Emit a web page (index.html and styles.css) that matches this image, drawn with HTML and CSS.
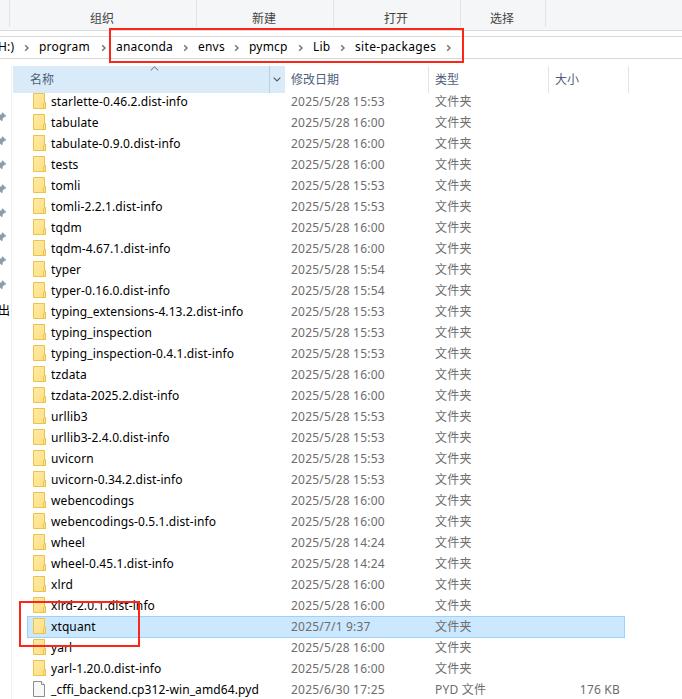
FILE: index.html
```
<!DOCTYPE html>
<html lang="zh-CN">
<head>
<meta charset="utf-8">
<title>site-packages</title>
<link rel="stylesheet" href="styles.css">
</head>
<body>
<svg class="defs" width="0" height="0">
<defs>
<linearGradient id="fg" x1="0" y1="0" x2="1" y2="1"><stop offset="0" stop-color="#ffe9a6"/><stop offset="1" stop-color="#ffdf80"/></linearGradient>
<symbol id="folder" viewBox="0 0 14 16"><path d="M.5 .5h11v9h1v6H.5z" fill="url(#fg)" stroke="#e9c34a"/><path d="M10.500 15.500v-4.500l1-1.500h1v6z" fill="#ffe391" stroke="#e9c34a"/></symbol>
<symbol id="file" viewBox="0 0 14 16"><path d="M.5 .5h8l3 3v12H.5z" fill="#f8f8f8" stroke="#8c8c8c"/><path d="M8.500 .5v3h3" fill="#fff" stroke="#8c8c8c"/></symbol>
<symbol id="chev" viewBox="0 0 6 8"><path d="M1.200 1.200L4 4L1.200 6.800" fill="none" stroke="#777" stroke-width="1.500"/></symbol>
<symbol id="pin" viewBox="0 0 8 10"><path d="M2.500 .3L6.200 4L5.400 5L4.500 4.800L2.700 6.600L2.600 8.500L1.800 9.200L0 7.500V2.800L1.800 2.200L1.600 1.200z" fill="#8f9ba5"/></symbol>
</defs>
</svg>
<div class="window">
<div class="ribbon"><div class="group g0"></div><div class="group g1">组织</div><div class="group g2">新建</div><div class="group g3">打开</div><div class="group g4">选择</div></div>
<div class="address">
<span class="crumb c0">H:)</span><svg class="chev"><use href="#chev"/></svg>
<span class="crumb c1">program</span><svg class="chev"><use href="#chev"/></svg>
<span class="crumb c2">anaconda</span><svg class="chev"><use href="#chev"/></svg>
<span class="crumb c3">envs</span><svg class="chev"><use href="#chev"/></svg>
<span class="crumb c4">pymcp</span><svg class="chev"><use href="#chev"/></svg>
<span class="crumb c5">Lib</span><svg class="chev"><use href="#chev"/></svg>
<span class="crumb c6">site-packages</span><svg class="chev"><use href="#chev"/></svg>
</div>
<div class="main">
<div class="nav">
<svg class="pin"><use href="#pin"/></svg><svg class="pin"><use href="#pin"/></svg><svg class="pin"><use href="#pin"/></svg><svg class="pin"><use href="#pin"/></svg><svg class="pin"><use href="#pin"/></svg><svg class="pin"><use href="#pin"/></svg><svg class="pin"><use href="#pin"/></svg><svg class="pin"><use href="#pin"/></svg>
<div class="navtext">出</div>
</div>
<div class="files">
<div class="head">
<div class="th th-name">名称<svg class="sort" viewBox="0 0 9 5"><path d="M.7 4.500L4.500 .8L8.300 4.500" fill="none" stroke="#666"/></svg></div>
<div class="th th-drop"><svg class="drop" viewBox="0 0 8 5"><path d="M.7 .7L4 4L7.300 .7" fill="none" stroke="#555" stroke-width="1.100"/></svg></div>
<div class="th th-date">修改日期</div><div class="th th-type">类型</div><div class="th th-size">大小</div>
</div>
<div class="list">
<div class="row"><svg class="icon"><use href="#folder"/></svg><span class="name">starlette-0.46.2.dist-info</span><span class="date">2025/5/28 15:53</span><span class="type">文件夹</span></div>
<div class="row"><svg class="icon"><use href="#folder"/></svg><span class="name">tabulate</span><span class="date">2025/5/28 16:00</span><span class="type">文件夹</span></div>
<div class="row"><svg class="icon"><use href="#folder"/></svg><span class="name">tabulate-0.9.0.dist-info</span><span class="date">2025/5/28 16:00</span><span class="type">文件夹</span></div>
<div class="row"><svg class="icon"><use href="#folder"/></svg><span class="name">tests</span><span class="date">2025/5/28 16:00</span><span class="type">文件夹</span></div>
<div class="row"><svg class="icon"><use href="#folder"/></svg><span class="name">tomli</span><span class="date">2025/5/28 15:53</span><span class="type">文件夹</span></div>
<div class="row"><svg class="icon"><use href="#folder"/></svg><span class="name">tomli-2.2.1.dist-info</span><span class="date">2025/5/28 15:53</span><span class="type">文件夹</span></div>
<div class="row"><svg class="icon"><use href="#folder"/></svg><span class="name">tqdm</span><span class="date">2025/5/28 16:00</span><span class="type">文件夹</span></div>
<div class="row"><svg class="icon"><use href="#folder"/></svg><span class="name">tqdm-4.67.1.dist-info</span><span class="date">2025/5/28 16:00</span><span class="type">文件夹</span></div>
<div class="row"><svg class="icon"><use href="#folder"/></svg><span class="name">typer</span><span class="date">2025/5/28 15:54</span><span class="type">文件夹</span></div>
<div class="row"><svg class="icon"><use href="#folder"/></svg><span class="name">typer-0.16.0.dist-info</span><span class="date">2025/5/28 15:54</span><span class="type">文件夹</span></div>
<div class="row"><svg class="icon"><use href="#folder"/></svg><span class="name">typing_extensions-4.13.2.dist-info</span><span class="date">2025/5/28 15:53</span><span class="type">文件夹</span></div>
<div class="row"><svg class="icon"><use href="#folder"/></svg><span class="name">typing_inspection</span><span class="date">2025/5/28 15:53</span><span class="type">文件夹</span></div>
<div class="row"><svg class="icon"><use href="#folder"/></svg><span class="name">typing_inspection-0.4.1.dist-info</span><span class="date">2025/5/28 15:53</span><span class="type">文件夹</span></div>
<div class="row"><svg class="icon"><use href="#folder"/></svg><span class="name">tzdata</span><span class="date">2025/5/28 16:00</span><span class="type">文件夹</span></div>
<div class="row"><svg class="icon"><use href="#folder"/></svg><span class="name">tzdata-2025.2.dist-info</span><span class="date">2025/5/28 16:00</span><span class="type">文件夹</span></div>
<div class="row"><svg class="icon"><use href="#folder"/></svg><span class="name">urllib3</span><span class="date">2025/5/28 15:53</span><span class="type">文件夹</span></div>
<div class="row"><svg class="icon"><use href="#folder"/></svg><span class="name">urllib3-2.4.0.dist-info</span><span class="date">2025/5/28 15:53</span><span class="type">文件夹</span></div>
<div class="row"><svg class="icon"><use href="#folder"/></svg><span class="name">uvicorn</span><span class="date">2025/5/28 15:53</span><span class="type">文件夹</span></div>
<div class="row"><svg class="icon"><use href="#folder"/></svg><span class="name">uvicorn-0.34.2.dist-info</span><span class="date">2025/5/28 15:53</span><span class="type">文件夹</span></div>
<div class="row"><svg class="icon"><use href="#folder"/></svg><span class="name">webencodings</span><span class="date">2025/5/28 16:00</span><span class="type">文件夹</span></div>
<div class="row"><svg class="icon"><use href="#folder"/></svg><span class="name">webencodings-0.5.1.dist-info</span><span class="date">2025/5/28 16:00</span><span class="type">文件夹</span></div>
<div class="row"><svg class="icon"><use href="#folder"/></svg><span class="name">wheel</span><span class="date">2025/5/28 14:24</span><span class="type">文件夹</span></div>
<div class="row"><svg class="icon"><use href="#folder"/></svg><span class="name">wheel-0.45.1.dist-info</span><span class="date">2025/5/28 14:24</span><span class="type">文件夹</span></div>
<div class="row"><svg class="icon"><use href="#folder"/></svg><span class="name">xlrd</span><span class="date">2025/5/28 16:00</span><span class="type">文件夹</span></div>
<div class="row"><svg class="icon"><use href="#folder"/></svg><span class="name">xlrd-2.0.1.dist-info</span><span class="date">2025/5/28 16:00</span><span class="type">文件夹</span></div>
<div class="row selected"><svg class="icon"><use href="#folder"/></svg><span class="name">xtquant</span><span class="date">2025/7/1 9:37</span><span class="type">文件夹</span></div>
<div class="row"><svg class="icon"><use href="#folder"/></svg><span class="name">yarl</span><span class="date">2025/5/28 16:00</span><span class="type">文件夹</span></div>
<div class="row"><svg class="icon"><use href="#folder"/></svg><span class="name">yarl-1.20.0.dist-info</span><span class="date">2025/5/28 16:00</span><span class="type">文件夹</span></div>
<div class="row"><svg class="icon"><use href="#file"/></svg><span class="name">_cffi_backend.cp312-win_amd64.pyd</span><span class="date">2025/6/30 17:25</span><span class="type">PYD 文件</span><span class="size">176 KB</span></div>
</div>
</div>
</div>
<div class="mark mark-path"></div>
<div class="mark mark-row"></div>
</div>
</body>
</html>
```
FILE: styles.css
```
* { box-sizing: border-box; }
body { margin: 0; background: #fff; font-family: "Noto Sans", "Noto Sans CJK SC", sans-serif; font-size: 12px; color: #000; }
.defs { position: absolute; }
.window { position: relative; width: 682px; height: 699px; overflow: hidden; }
.ribbon { display: flex; height: 31px; background: #f5f6f7; border-bottom: 1px solid #dadbdc; color: #444; }
.group { height: 27px; border-right: 1px solid #e2e3e4; padding-right: 2px; text-align: center; line-height: 37px; }
.g0 { width: 10px; }
.g1 { width: 187px; }
.g2 { width: 137px; }
.g3 { width: 127px; }
.g4 { width: 85px; }
.address { display: flex; align-items: center; height: 23px; margin-top: 5px; border: solid #d9d9d9; border-width: 1px 0; white-space: nowrap; }
.crumb { flex: none; line-height: 20px; letter-spacing: .2px; margin-top: -1px; }
.chev { flex: none; width: 6px; height: 8px; margin-right: 9px; margin-top: 1px; }
.c0 { width: 26px; margin-left: -2px; }
.c1 { width: 62px; }
.c2 { width: 67px; }
.c3 { width: 36px; }
.c4 { width: 49px; }
.c5 { width: 27px; }
.c6 { width: 91px; letter-spacing: .35px; }
.main { display: flex; height: 633px; margin-top: 7px; }
.nav { width: 12px; border-right: 1px solid #f0f0f0; padding-top: 46px; overflow: hidden; }
.pin { display: block; width: 8px; height: 10px; margin-bottom: 14px; }
.navtext { margin-left: -2px; margin-top: -3px; line-height: 20px; width: 12px; }
.files { width: 670px; padding-left: 1px; }
.head { display: flex; position: relative; z-index: 1; height: 27px; line-height: 27px; color: #4c607a; }
.th { border-right: 1px solid #e3e3e3; }
.th-name { position: relative; width: 257px; padding-left: 17px; background: #d9ebf9; border-color: #b5d3e8; }
.sort { position: absolute; left: 137px; top: 0; width: 9px; height: 5px; }
.th-drop { display: flex; align-items: center; justify-content: center; width: 15px; padding-right: 2px; background: #d9ebf9; border: 0; }
.drop { width: 8px; height: 5px; }
.th-date { width: 144px; padding-left: 6px; }
.th-type { width: 120px; padding-left: 6px; }
.th-size { width: 80px; padding-left: 6px; }
.list { margin-top: -2px; }
.row { display: grid; grid-template-columns: 18px 240px 144px 120px 66px; grid-template-rows: 21px; align-items: center; height: 21px; width: 598px; margin-left: 14px; padding-left: 6px; line-height: 21px; white-space: nowrap; color: #6d6d6d; letter-spacing: .2px; }
.selected { background: #cce8ff; box-shadow: inset 0 0 0 1px #99d1ff; height: 22px; margin-bottom: -1px; }
.icon { width: 14px; height: 16px; margin-bottom: 1px; }
.name { color: #000; letter-spacing: .1px; }
.size { text-align: right; padding-right: 1px; }
.mark { position: absolute; border: 2px solid #fb2617; }
.mark-path { left: 109px; top: 28px; width: 355px; height: 35px; }
.mark-row { left: 19px; top: 601px; width: 121px; height: 46px; }
```
